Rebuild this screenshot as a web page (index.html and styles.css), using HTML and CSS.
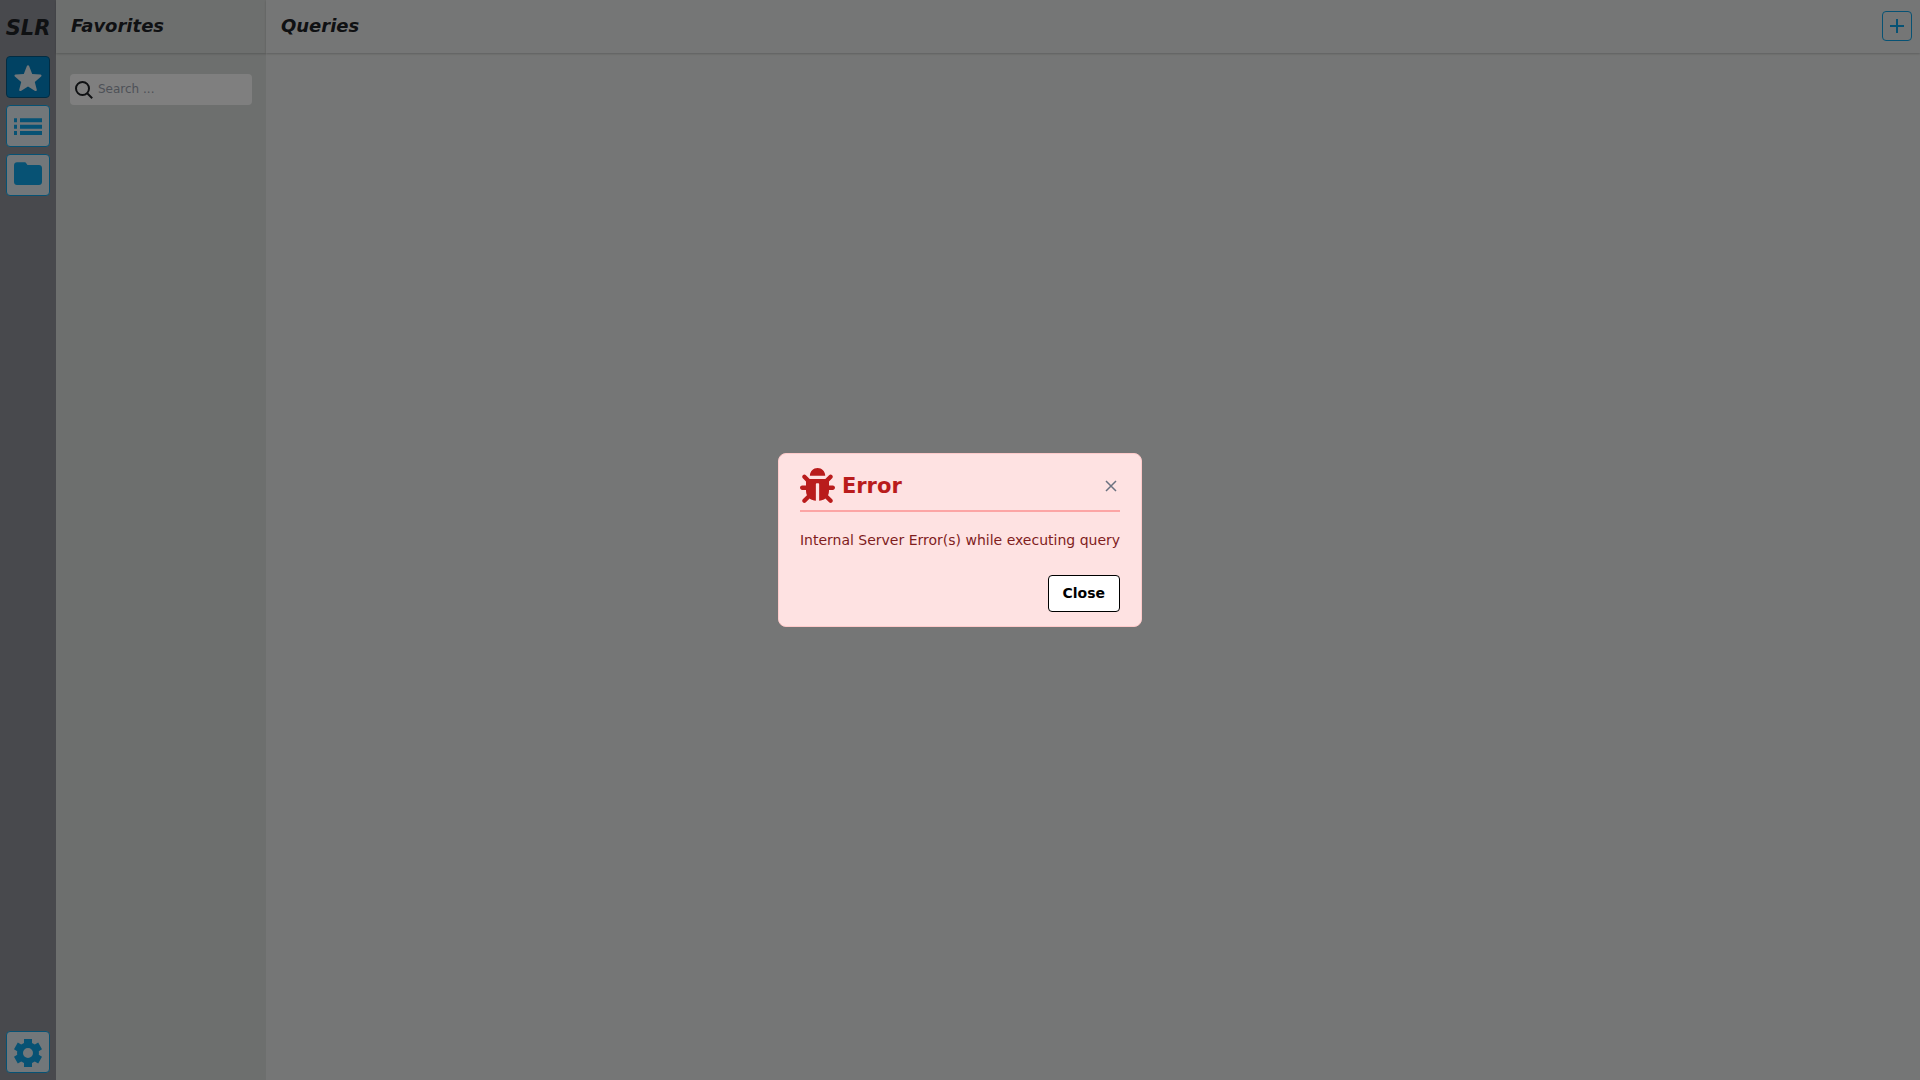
FILE: index.html
```html
<!DOCTYPE html>
<html lang="en">
<head>
<meta charset="utf-8">
<meta name="viewport" content="width=device-width, initial-scale=1">
<title>SLR</title>
<link rel="stylesheet" href="styles.css">
</head>
<body>
<div class="app">
  <nav class="rail" aria-label="Main">
    <div class="logo">SLR</div>
    <button class="rail-button active" type="button" aria-label="Favorites">
      <svg class="rail-icon" viewBox="0 0 28 28"><path d="M14 1.300c.5 0 .9.300 1.100.8l3.100 7.900 8.200.6c1.100.1 1.500 1.300.7 2l-6.300 5.300 2 7.800c.2 1-.8 1.700-1.700 1.200L14 22.500l-7.100 4.400c-.9.500-1.900-.2-1.700-1.200l2-7.800L.9 12.600c-.8-.7-.4-1.900.7-2l8.200-.6 3.100-7.900c.2-.5.600-.8 1.100-.8z"/></svg>
    </button>
    <button class="rail-button" type="button" aria-label="List">
      <svg class="rail-icon" viewBox="0 0 28 28"><path d="M0 5.300h3v4H0zM6 5.300h22v4H6zM0 11.700h3v4H0zM6 11.700h22v4H6zM0 18h3v4H0zM6 18h22v4H6z"/></svg>
    </button>
    <button class="rail-button" type="button" aria-label="Folders">
      <svg class="rail-icon" viewBox="0 0 28 28"><path d="M3 .3h7.500c.9 0 1.400.4 1.900 1.200L13.500 3H25c1.700 0 3 1.300 3 3v14c0 1.700-1.300 3-3 3H3c-1.700 0-3-1.300-3-3V3.300c0-1.700 1.300-3 3-3z"/></svg>
    </button>
    <button class="rail-button settings" type="button" aria-label="Settings">
      <svg class="rail-icon" viewBox="0 0 28 28"><path fill-rule="evenodd" d="M10 0h8v3.900l2.800 1.600 3.400-1.900 3.800 6.600-3.200 2c.2 1.200.2 2.400 0 3.600l3.200 2-3.800 6.600-3.400-1.900-2.800 1.600V28h-8v-3.900l-2.800-1.600-3.400 1.900L0 17.800l3.200-2c-.2-1.200-.2-2.400 0-3.600l-3.200-2 3.800-6.600 3.400 1.900L10 3.900zM14 9a5 5 0 1 0 0 10 5 5 0 0 0 0-10z"/></svg>
    </button>
  </nav>
  <aside class="favorites">
    <header class="bar"><h2 class="title">Favorites</h2></header>
    <div class="search">
      <svg class="search-icon" viewBox="0 0 18 18"><circle cx="7.500" cy="7.500" r="6.500"/><path d="M12.200 12.200l5 5"/></svg>
      <input class="search-input" type="text" placeholder="Search ..." aria-label="Search favorites">
    </div>
  </aside>
  <main class="queries">
    <header class="bar">
      <h2 class="title">Queries</h2>
      <button class="add" type="button" aria-label="Add query"><svg class="add-icon" viewBox="0 0 14 14"><path d="M7 0v14M0 7h14"/></svg></button>
    </header>
  </main>
</div>
<div class="overlay">
  <section class="dialog" role="dialog" aria-modal="true" aria-labelledby="dialog-title">
    <header class="dialog-head">
      <svg class="bug" viewBox="0 0 512 512"><path d="M511.988 288.900c-.478 17.430-15.217 31.100-32.653 31.100H424v16c0 21.864-4.882 42.584-13.600 61.145l60.228 60.228c12.496 12.497 12.496 32.758 0 45.255-12.498 12.497-32.759 12.496-45.256 0l-54.736-54.736C345.886 467.965 314.351 480 280 480V236c0-6.627-5.373-12-12-12h-24c-6.627 0-12 5.373-12 12v244c-34.351 0-65.886-12.035-90.636-32.108l-54.736 54.736c-12.498 12.497-32.759 12.496-45.256 0-12.496-12.497-12.496-32.758 0-45.255l60.228-60.228C92.882 378.584 88 357.864 88 336v-16H32.666C15.230 320 .491 306.330.013 288.900-.484 270.816 14.028 256 32 256h56v-58.745l-46.628-46.628c-12.496-12.497-12.496-32.758 0-45.255 12.498-12.497 32.758-12.497 45.256 0L141.255 160h229.489l54.627-54.627c12.498-12.497 32.758-12.497 45.256 0 12.496 12.497 12.496 32.758 0 45.255L424 197.255V256h56c17.972 0 32.484 14.816 31.988 32.900zM257 0c-61.856 0-112 50.144-112 112h224C369 50.144 318.856 0 257 0z"/></svg>
      <h1 class="dialog-title" id="dialog-title">Error</h1>
      <button class="dismiss" type="button" aria-label="Dismiss"><svg class="dismiss-icon" viewBox="0 0 12 12"><path d="M1 1l10 10M11 1L1 11"/></svg></button>
    </header>
    <p class="message">Internal Server Error(s) while executing query</p>
    <footer class="actions"><button class="close" type="button">Close</button></footer>
  </section>
</div>
</body>
</html>
```
FILE: styles.css
```css
* { box-sizing: border-box; }
body {
  margin: 0;
  font: 14px/20px "DejaVu Sans", sans-serif;
  color: #1f2226;
}
h1, h2, p { margin: 0; }
button { padding: 0; cursor: pointer; font: inherit; }
svg { display: block; }

.app { display: flex; min-height: 100vh; }

.rail {
  display: flex;
  flex-direction: column;
  align-items: center;
  gap: 7px;
  width: 56px;
  padding-bottom: 7px;
  background: #91939a;
}
.logo {
  height: 49px;
  font: italic bold 21px/56px "DejaVu Sans", sans-serif;
}
.rail-button {
  display: flex;
  align-items: center;
  justify-content: center;
  width: 44px;
  height: 42px;
  padding-top: 2px;
  border: 1px solid #0ea5e9;
  border-radius: 4px;
  background: #e4eff4;
  color: #0ea5e9;
}
.rail-button.active {
  border-color: #075985;
  background: #0284c7;
  color: #e4eff4;
}
.settings { margin-top: auto; }
.rail-icon { width: 28px; height: 28px; fill: currentColor; }

.favorites { width: 210px; background: #dbdedc; }
.queries { flex: 1; background: #ebedec; }
.bar {
  display: flex;
  align-items: center;
  justify-content: space-between;
  height: 53px;
  padding: 0 8px 1px 15px;
  box-shadow: 0 1px 2px rgba(0, 0, 0, 0.2);
}
.title { font: italic bold 18px/28px "DejaVu Sans", sans-serif; }
.search {
  display: flex;
  align-items: center;
  gap: 5px;
  height: 31px;
  margin: 21px 14px;
  padding: 0 5px;
  border-radius: 4px;
  background: #fff;
}
.search-icon { width: 18px; height: 18px; fill: none; stroke: #1f2226; stroke-width: 2; flex: none; }
.search-input {
  flex: 1;
  min-width: 0;
  padding: 0 0 2px;
  border: 0;
  outline: 0;
  background: none;
  font: 12px/16px "DejaVu Sans", sans-serif;
}
.search-input::placeholder { color: #9ca3af; opacity: 1; }
.add {
  display: flex;
  align-items: center;
  justify-content: center;
  width: 30px;
  height: 30px;
  border: 1px solid #0ea5e9;
  border-radius: 4px;
  background: none;
  color: #0ea5e9;
}
.add-icon { width: 14px; height: 14px; fill: none; stroke: currentColor; stroke-width: 2; }

.overlay {
  position: fixed;
  inset: 0;
  display: flex;
  align-items: center;
  justify-content: center;
  background: rgba(0, 0, 0, 0.5);
}
.dialog {
  padding: 14px 21px;
  border: 1px solid #fecaca;
  border-radius: 8px;
  background: #fee2e2;
}
.dialog-head {
  display: flex;
  align-items: center;
  gap: 7px;
  padding-bottom: 7px;
  border-bottom: 2px solid #fca5a5;
  color: #b91c1c;
}
.bug { width: 35px; height: 35px; fill: currentColor; }
.dialog-title { flex: 1; font: bold 21px/28px "DejaVu Sans", sans-serif; }
.dismiss {
  display: flex;
  padding: 3px;
  border: 0;
  background: none;
  color: #6b7280;
}
.dismiss-icon { width: 12px; height: 12px; fill: none; stroke: currentColor; stroke-width: 1.5; }
.message { padding: 18px 0 25px; color: #7f1d1d; }
.actions { display: flex; justify-content: flex-end; }
.close {
  height: 37px;
  padding: 0 14px 2px;
  border: 1px solid #000;
  border-radius: 4px;
  background: #fff;
  color: #000;
  font-weight: bold;
}
```
